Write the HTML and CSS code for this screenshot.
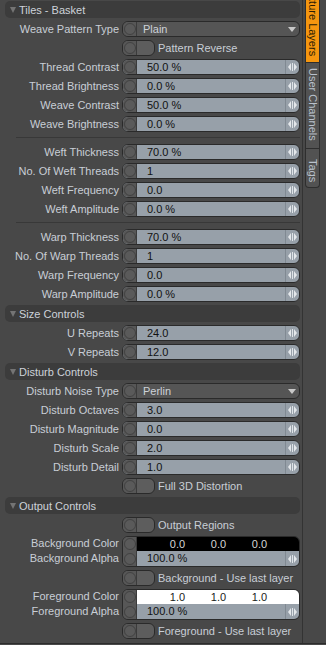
FILE: index.html
```html
<!DOCTYPE html>
<html lang="en">
<head>
  <meta charset="UTF-8">
  <meta name="viewport" content="width=device-width, initial-scale=1.0">
  <title>Tiles - Basket</title>
  <link rel="stylesheet" href="styles.css">
</head>
<body>
  <div class="app">
    <div class="panel">
      <div class="head"><span class="caret"></span>Tiles - Basket</div>
      <div class="row"><label>Weave Pattern Type</label><div class="ctl drop"><span class="key"></span><span class="val">Plain</span><span class="down"></span></div></div>
      <div class="row"><span></span><div class="opt"><div class="check"><span class="key"></span></div>Pattern Reverse</div></div>
      <div class="row"><label>Thread Contrast</label><div class="ctl"><span class="key"></span><span class="val">50.0 %</span><span class="spin"></span></div></div>
      <div class="row"><label>Thread Brightness</label><div class="ctl"><span class="key"></span><span class="val">0.0 %</span><span class="spin"></span></div></div>
      <div class="row"><label>Weave Contrast</label><div class="ctl"><span class="key"></span><span class="val">50.0 %</span><span class="spin"></span></div></div>
      <div class="row"><label>Weave Brightness</label><div class="ctl"><span class="key"></span><span class="val">0.0 %</span><span class="spin"></span></div></div>
      <div class="sep"></div>
      <div class="row"><label>Weft Thickness</label><div class="ctl"><span class="key"></span><span class="val">70.0 %</span><span class="spin"></span></div></div>
      <div class="row"><label>No. Of Weft Threads</label><div class="ctl"><span class="key"></span><span class="val">1</span><span class="spin"></span></div></div>
      <div class="row"><label>Weft Frequency</label><div class="ctl"><span class="key"></span><span class="val">0.0</span><span class="spin"></span></div></div>
      <div class="row"><label>Weft Amplitude</label><div class="ctl"><span class="key"></span><span class="val">0.0 %</span><span class="spin"></span></div></div>
      <div class="sep"></div>
      <div class="row"><label>Warp Thickness</label><div class="ctl"><span class="key"></span><span class="val">70.0 %</span><span class="spin"></span></div></div>
      <div class="row"><label>No. Of Warp Threads</label><div class="ctl"><span class="key"></span><span class="val">1</span><span class="spin"></span></div></div>
      <div class="row"><label>Warp Frequency</label><div class="ctl"><span class="key"></span><span class="val">0.0</span><span class="spin"></span></div></div>
      <div class="row"><label>Warp Amplitude</label><div class="ctl"><span class="key"></span><span class="val">0.0 %</span><span class="spin"></span></div></div>

      <div class="head"><span class="caret"></span>Size Controls</div>
      <div class="row"><label>U Repeats</label><div class="ctl"><span class="key"></span><span class="val">24.0</span><span class="spin"></span></div></div>
      <div class="row"><label>V Repeats</label><div class="ctl"><span class="key"></span><span class="val">12.0</span><span class="spin"></span></div></div>

      <div class="head"><span class="caret"></span>Disturb Controls</div>
      <div class="row"><label>Disturb Noise Type</label><div class="ctl drop"><span class="key"></span><span class="val">Perlin</span><span class="down"></span></div></div>
      <div class="row"><label>Disturb Octaves</label><div class="ctl"><span class="key"></span><span class="val">3.0</span><span class="spin"></span></div></div>
      <div class="row"><label>Disturb Magnitude</label><div class="ctl"><span class="key"></span><span class="val">0.0</span><span class="spin"></span></div></div>
      <div class="row"><label>Disturb Scale</label><div class="ctl"><span class="key"></span><span class="val">2.0</span><span class="spin"></span></div></div>
      <div class="row"><label>Disturb Detail</label><div class="ctl"><span class="key"></span><span class="val">1.0</span><span class="spin"></span></div></div>
      <div class="row"><span></span><div class="opt"><div class="check"><span class="key"></span></div>Full 3D Distortion</div></div>

      <div class="head"><span class="caret"></span>Output Controls</div>
      <div class="row"><span></span><div class="opt"><div class="check"><span class="key"></span></div>Output Regions</div></div>
      <div class="pair">
        <label class="top">Background Color</label>
        <label class="bottom">Background Alpha</label>
        <div class="cgroup">
          <div class="keys"><span class="key"></span><span class="key"></span></div>
          <div class="cbody">
            <div class="swatch black"><span>0.0</span><span>0.0</span><span>0.0</span></div>
            <div class="alpha"><span class="val">100.0 %</span><span class="spin"></span></div>
          </div>
        </div>
      </div>
      <div class="row"><span></span><div class="opt"><div class="check"><span class="key"></span></div>Background - Use last layer</div></div>
      <div class="pair">
        <label class="top">Foreground Color</label>
        <label class="bottom">Foreground Alpha</label>
        <div class="cgroup">
          <div class="keys"><span class="key"></span><span class="key"></span></div>
          <div class="cbody">
            <div class="swatch white"><span>1.0</span><span>1.0</span><span>1.0</span></div>
            <div class="alpha"><span class="val">100.0 %</span><span class="spin"></span></div>
          </div>
        </div>
      </div>
      <div class="row"><span></span><div class="opt"><div class="check"><span class="key"></span></div>Foreground - Use last layer</div></div>
    </div>

    <div class="tabs">
      <div class="tab on">Texture Layers</div>
      <div class="tab">User Channels</div>
      <div class="tab last">Tags</div>
    </div>
  </div>
</body>
</html>
```

FILE: styles.css
```css
* {
  box-sizing: border-box;
}

body {
  margin: 0;
  background-color: #484848;
  font-family: "Liberation Sans", Arial, sans-serif;
  font-size: 11px;
  color: #c8ced6;
  overflow: hidden;
}

.app {
  display: flex;
  height: 644px;
  border-bottom: 1px solid #2c2c2c;
  overflow: hidden;
}

.panel {
  width: 303px;
  flex: none;
  padding: 1px 2px 0 5px;
  display: flex;
  flex-direction: column;
  gap: 3px;
  border-right: 1px solid #333;
}

/* section headers */
.head {
  height: 17px;
  flex: none;
  background-color: #3c3c3c;
  border-radius: 5px;
  display: flex;
  align-items: center;
  padding-left: 5px;
  color: #cdd2d9;
}

.caret {
  width: 0;
  height: 0;
  border-left: 3.5px solid transparent;
  border-right: 3.5px solid transparent;
  border-top: 6px solid #747474;
  margin-right: 3px;
}

.row {
  display: grid;
  grid-template-columns: 117px 1fr;
  height: 16px;
  flex: none;
  align-items: center;
}

label {
  text-align: right;
  padding-right: 3px;
  white-space: nowrap;
}

/* numeric / dropdown control */
.ctl {
  height: 16px;
  border: 1px solid #2a2a2a;
  border-radius: 6px;
  display: flex;
  overflow: hidden;
  background-color: #97a0a9;
}

.key {
  width: 14px;
  flex: none;
  background-color: #575757;
  border-right: 1px solid #3b3b3b;
  display: flex;
  align-items: center;
  justify-content: center;
}

.key::after {
  content: "";
  width: 10px;
  height: 10px;
  border-radius: 50%;
  border: 1px solid #424242;
  background-color: #5a5a5a;
}

.val {
  flex: 1;
  color: #111;
  padding-left: 10px;
  line-height: 14px;
  white-space: nowrap;
}

.spin {
  width: 14px;
  flex: none;
  border-left: 1px solid #808992;
  display: flex;
  align-items: center;
  justify-content: center;
  gap: 3px;
  background: linear-gradient(#dfe4e8, #dfe4e8) center / 1px 8px no-repeat;
}

.spin::before {
  content: "";
  border-right: 3px solid #e4e8eb;
  border-top: 4px solid transparent;
  border-bottom: 4px solid transparent;
}

.spin::after {
  content: "";
  border-left: 3px solid #e4e8eb;
  border-top: 4px solid transparent;
  border-bottom: 4px solid transparent;
}

.drop {
  background-color: #555;
}

.drop .val {
  color: #cdd2d8;
  padding-left: 6px;
}

.down {
  width: 14px;
  display: flex;
  align-items: center;
  justify-content: center;
}

.down::after {
  content: "";
  border-top: 5px solid #c9c9c9;
  border-left: 4px solid transparent;
  border-right: 4px solid transparent;
}

/* toggles */
.opt {
  display: flex;
  align-items: center;
  gap: 3px;
  white-space: nowrap;
}

.check {
  width: 33px;
  height: 16px;
  border: 1px solid #2a2a2a;
  border-radius: 6px;
  display: flex;
  overflow: hidden;
  background-color: #5d5d5d;
}

.sep {
  height: 1px;
  flex: none;
  background-color: #383838;
  margin: 2px 0 3px 11px;
}

/* colour + alpha pairs */
.pair {
  display: grid;
  grid-template-columns: 117px 1fr;
  grid-template-rows: 15px 16px;
  flex: none;
}

.pair .top {
  grid-row: 1;
  line-height: 15px;
}

.pair .bottom {
  grid-row: 2;
  line-height: 15px;
}

.cgroup {
  grid-column: 2;
  grid-row: 1 / 3;
  border: 1px solid #2a2a2a;
  border-radius: 6px;
  overflow: hidden;
  display: flex;
}

.keys {
  display: flex;
  flex-direction: column;
  background-color: #575757;
}

.keys .key {
  flex: 1;
}

.cbody {
  flex: 1;
  display: flex;
  flex-direction: column;
}

.swatch {
  height: 14px;
  display: grid;
  grid-template-columns: repeat(3, 41px);
  padding-left: 20px;
  line-height: 14px;
  text-align: center;
}

.swatch.black {
  background-color: #000;
  color: #d6d6d6;
}

.swatch.white {
  background-color: #fff;
  color: #1a1a1a;
}

.alpha {
  flex: 1;
  display: flex;
  background-color: #97a0a9;
}

/* side tabs */
.tabs {
  flex: 1;
  padding-left: 2px;
}

.tab {
  writing-mode: vertical-rl;
  width: 15px;
  line-height: 13px;
  border: 1px solid #2e2e2e;
  border-top: none;
  background-color: #525252;
  color: #b9c1cc;
  padding: 5px 0 7px;
  white-space: nowrap;
}

.tab.on {
  background-color: #f5960f;
  color: #2a1c04;
  margin-top: -20px;
  padding: 4px 0 6px;
}

.tab.last {
  padding: 10px 0 5px;
  border-radius: 0 0 4px 4px;
}
```
